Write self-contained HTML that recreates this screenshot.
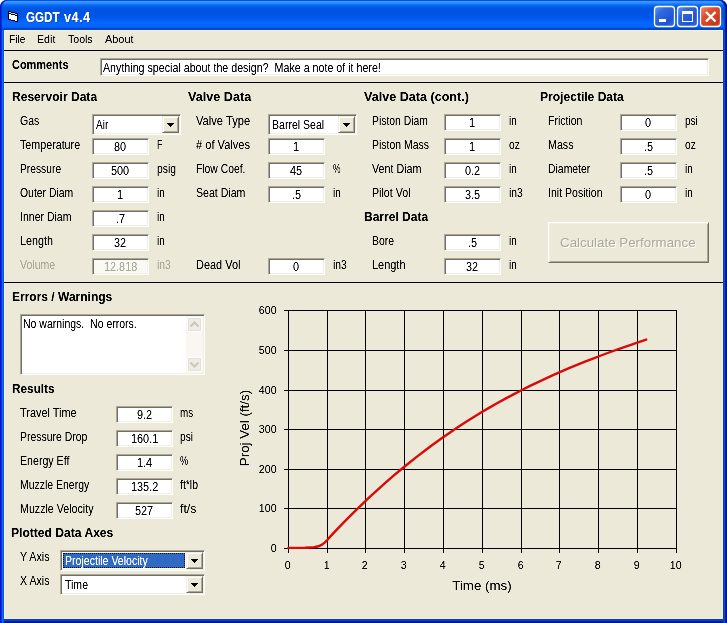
<!DOCTYPE html><html><head><meta charset="utf-8"><title>GGDT v4.4</title><style>
html,body{margin:0;padding:0}
body{width:727px;height:623px;overflow:hidden;position:relative;background:#ECE9D8;font-family:"Liberation Sans", sans-serif;font-size:12px;color:#000}
.t{position:absolute;white-space:pre;transform-origin:0 0;}
.sunk{position:absolute;box-sizing:border-box;border:1px solid;border-color:#ACA899 #fff #fff #ACA899;box-shadow:inset 1px 1px 0 #716F64, inset -1px -1px 0 #F1EFE2;}
.btn{position:absolute;box-sizing:border-box;background:#ECE9D8;border:1px solid;border-color:#F1EFE2 #716F64 #716F64 #F1EFE2;box-shadow:inset 1px 1px 0 #fff, inset -1px -1px 0 #ACA899;}
.bigbtn{position:absolute;box-sizing:border-box;background:#ECE9D8;border:1px solid;border-color:#fff #716F64 #716F64 #fff;box-shadow:inset 1px 1px 0 #F1EFE2, inset -1px -1px 0 #ACA899;}
.arrs{position:absolute;display:block}
.arr{position:absolute;width:0;height:0;border-left:3.5px solid transparent;border-right:3.5px solid transparent;border-top:4px solid #000}
.sel{position:absolute;background:#316AC5;outline:1px dotted #000;outline-offset:-1px}
.sbb{position:absolute;width:15px;height:15px;box-sizing:border-box;background:#EEEDE5;border:1px solid #fff;border-radius:2px;box-shadow:inset 0 0 0 1px #E3E1D6}
.sbb svg{position:absolute;left:-2px;top:-2px}
#titlebar{position:absolute;left:0;top:0;width:727px;height:30px;border-radius:7px 7px 0 0;
background:linear-gradient(to bottom,#0A52DC 0%,#0A52DC 3%,#3A94FF 5%,#3391FF 9%,#1C82FF 12%,#0A70F8 16%,#0562EC 21%,#0057E5 27%,#0054E3 32%,#0055E8 56%,#005CF4 64%,#0468FE 76%,#0466FC 90%,#0346D4 95%,#0440CC 100%);box-shadow:inset 1px 0 #0019CF, inset 2px 0 #0831D9, inset -1px 0 #00138C, inset -2px 0 #001EA0, inset -3px 0 #1046C8;}
.bl{position:absolute;background:#0831D9}
.hl{position:absolute;left:4px;width:719px;height:1px;background:#000}
.wb{position:absolute;top:6px;width:21px;height:21px;box-sizing:border-box;border:1px solid #fff;border-radius:3px;
background:radial-gradient(circle at 90% 90%, #0054E9 0%, #2263D5 55%, #4479E4 70%, #A3BBEC 90%, #fff 100%);box-shadow:inset 0 -1px 2px 1px #4646FF;}
</style></head><body>
<div style="position:absolute;left:0;top:0;width:727px;height:623px;box-shadow:inset 1px 0 #0019CF, inset 2px 0 #0831D9, inset 3px 0 #166AEE, inset 4px 0 #0855DD, inset -1px 0 #00138C, inset -2px 0 #001EA0, inset -3px 0 #1046C8, inset -4px 0 #0F3CB4, inset 0 -1px #00138C, inset 0 -2px #0020B0, inset 0 -3px #0A3CC4, inset 0 -4px #0F3CB0;"></div>
<div style="position:absolute;left:4px;top:30px;width:1px;height:589px;background:#EEF0FB"></div>
<div style="position:absolute;left:722px;top:30px;width:1px;height:589px;background:#E2F0FF"></div>
<div style="position:absolute;left:4px;top:618px;width:719px;height:1px;background:#E4F0FF"></div>
<div style="position:absolute;left:4px;top:30px;width:719px;height:1px;background:#F2F3F4"></div>
<div style="position:absolute;left:0;top:0;width:727px;height:30px;background:#fff"></div>
<div id="titlebar"></div>
<div class="hl" style="top:50px"></div><div class="hl" style="top:82px"></div><div class="hl" style="top:282px"></div>
<svg style="position:absolute;left:0;top:0" width="727" height="30">
<g shape-rendering="crispEdges">
<rect x="8" y="11" width="3" height="1" fill="#000"/><rect x="8" y="11" width="1" height="9" fill="#000"/>
<rect x="9" y="12" width="2" height="1" fill="#9FE4F6"/><rect x="9" y="13" width="2" height="1" fill="#000"/><rect x="9" y="14" width="2" height="5" fill="#fff"/><rect x="8" y="19" width="3" height="1" fill="#000"/>
<rect x="11" y="12" width="4" height="1" fill="#000"/><rect x="11" y="13" width="4" height="1" fill="#9FE4F6"/><rect x="11" y="14" width="4" height="1" fill="#000"/><rect x="11" y="15" width="4" height="5" fill="#fff"/><rect x="11" y="20" width="4" height="1" fill="#000"/>
<rect x="15" y="13" width="3" height="1" fill="#000"/><rect x="15" y="14" width="2" height="1" fill="#9FE4F6"/><rect x="15" y="15" width="2" height="1" fill="#000"/><rect x="15" y="16" width="2" height="5" fill="#fff"/><rect x="15" y="21" width="3" height="1" fill="#000"/><rect x="17" y="13" width="1" height="9" fill="#000"/>
</g>
<defs>
<linearGradient id="bb" x1="0" y1="0" x2="1" y2="1"><stop offset="0" stop-color="#6A98F5"/><stop offset="0.3" stop-color="#3068E2"/><stop offset="0.72" stop-color="#2052D5"/><stop offset="1" stop-color="#3A6CE6"/></linearGradient>
<linearGradient id="rb" x1="0" y1="0" x2="1" y2="1"><stop offset="0" stop-color="#EE9078"/><stop offset="0.35" stop-color="#E0502E"/><stop offset="0.8" stop-color="#C4381A"/><stop offset="1" stop-color="#DA5632"/></linearGradient>
</defs>
<rect x="654.5" y="6.5" width="20" height="20" rx="3" fill="url(#bb)" stroke="#fff" stroke-width="1.3"/>
<rect x="677.5" y="6.5" width="20" height="20" rx="3" fill="url(#bb)" stroke="#fff" stroke-width="1.3"/>
<rect x="700.5" y="6.5" width="20" height="20" rx="3" fill="url(#rb)" stroke="#fff" stroke-width="1.3"/>
<rect x="659" y="19" width="7" height="3" fill="#fff"/>
<rect x="682.5" y="12" width="10" height="9.5" fill="none" stroke="#fff"/><rect x="682" y="11" width="11" height="3" fill="#fff"/>
<path d="M706 12 L715.5 21.5 M715.5 12 L706 21.5" stroke="#fff" stroke-width="2.4" fill="none"/>
</svg>
<div class="sunk" style="left:92px;top:114px;width:89px;height:21px;background:#fff"></div>
<div class="btn" style="left:162px;top:116px;width:17px;height:17px"></div>
<svg class="arrs" style="left:167px;top:123px" width="7" height="4" shape-rendering="crispEdges"><rect x="0" y="0" width="7" height="1"/><rect x="1" y="1" width="5" height="1"/><rect x="2" y="2" width="3" height="1"/><rect x="3" y="3" width="1" height="1"/></svg>
<div class="sunk" style="left:92px;top:138px;width:57px;height:17px;background:#fff"></div>
<div class="sunk" style="left:92px;top:162px;width:57px;height:17px;background:#fff"></div>
<div class="sunk" style="left:92px;top:186px;width:57px;height:17px;background:#fff"></div>
<div class="sunk" style="left:92px;top:210px;width:57px;height:17px;background:#fff"></div>
<div class="sunk" style="left:92px;top:234px;width:57px;height:17px;background:#fff"></div>
<div class="sunk" style="left:92px;top:258px;width:57px;height:17px;background:#FAF9F4"></div>
<div class="sunk" style="left:268px;top:114px;width:89px;height:21px;background:#fff"></div>
<div class="btn" style="left:338px;top:116px;width:17px;height:17px"></div>
<svg class="arrs" style="left:343px;top:123px" width="7" height="4" shape-rendering="crispEdges"><rect x="0" y="0" width="7" height="1"/><rect x="1" y="1" width="5" height="1"/><rect x="2" y="2" width="3" height="1"/><rect x="3" y="3" width="1" height="1"/></svg>
<div class="sunk" style="left:268px;top:138px;width:57px;height:17px;background:#fff"></div>
<div class="sunk" style="left:268px;top:162px;width:57px;height:17px;background:#fff"></div>
<div class="sunk" style="left:268px;top:186px;width:57px;height:17px;background:#fff"></div>
<div class="sunk" style="left:268px;top:258px;width:57px;height:17px;background:#fff"></div>
<div class="sunk" style="left:444px;top:114px;width:57px;height:17px;background:#fff"></div>
<div class="sunk" style="left:444px;top:138px;width:57px;height:17px;background:#fff"></div>
<div class="sunk" style="left:444px;top:162px;width:57px;height:17px;background:#fff"></div>
<div class="sunk" style="left:444px;top:186px;width:57px;height:17px;background:#fff"></div>
<div class="sunk" style="left:444px;top:234px;width:57px;height:17px;background:#fff"></div>
<div class="sunk" style="left:444px;top:258px;width:57px;height:17px;background:#fff"></div>
<div class="sunk" style="left:620px;top:114px;width:57px;height:17px;background:#fff"></div>
<div class="sunk" style="left:620px;top:138px;width:57px;height:17px;background:#fff"></div>
<div class="sunk" style="left:620px;top:162px;width:57px;height:17px;background:#fff"></div>
<div class="sunk" style="left:620px;top:186px;width:57px;height:17px;background:#fff"></div>
<div class="sunk" style="left:100px;top:58px;width:609px;height:18px;background:#fff"></div>
<div class="sunk" style="left:116px;top:406px;width:57px;height:17px;background:#fff"></div>
<div class="sunk" style="left:116px;top:430px;width:57px;height:17px;background:#fff"></div>
<div class="sunk" style="left:116px;top:454px;width:57px;height:17px;background:#fff"></div>
<div class="sunk" style="left:116px;top:478px;width:57px;height:17px;background:#fff"></div>
<div class="sunk" style="left:116px;top:502px;width:57px;height:17px;background:#fff"></div>
<div class="sunk" style="left:60px;top:550px;width:145px;height:21px;background:#fff"></div>
<div class="btn" style="left:186px;top:552px;width:17px;height:17px"></div>
<svg class="arrs" style="left:191px;top:559px" width="7" height="4" shape-rendering="crispEdges"><rect x="0" y="0" width="7" height="1"/><rect x="1" y="1" width="5" height="1"/><rect x="2" y="2" width="3" height="1"/><rect x="3" y="3" width="1" height="1"/></svg>
<div class="sel" style="left:63px;top:553px;width:122px;height:15px"></div>
<div class="sunk" style="left:60px;top:574px;width:145px;height:21px;background:#fff"></div>
<div class="btn" style="left:186px;top:576px;width:17px;height:17px"></div>
<svg class="arrs" style="left:191px;top:583px" width="7" height="4" shape-rendering="crispEdges"><rect x="0" y="0" width="7" height="1"/><rect x="1" y="1" width="5" height="1"/><rect x="2" y="2" width="3" height="1"/><rect x="3" y="3" width="1" height="1"/></svg>
<div class="sunk" style="left:20px;top:314px;width:185px;height:61px;background:#fff"></div>
<div style="position:absolute;left:186px;top:316px;width:17px;height:57px;background:#F8F7F1"></div>
<div class="sbb" style="left:187px;top:317px"><svg width="17" height="17"><path d="M4.5 10.5 L8.5 6.5 L12.5 10.5" fill="none" stroke="#C9C7BA" stroke-width="2"/></svg></div>
<div class="sbb" style="left:187px;top:357px"><svg width="17" height="17"><path d="M4.5 6.5 L8.5 10.5 L12.5 6.5" fill="none" stroke="#C9C7BA" stroke-width="2"/></svg></div>
<div class="bigbtn" style="left:548px;top:222px;width:161px;height:41px"></div>
<svg style="position:absolute;left:0;top:0" width="727" height="623" shape-rendering="crispEdges"><rect x="288" y="310" width="1" height="243" fill="#000"/><rect x="327" y="310" width="1" height="243" fill="#000"/><rect x="365" y="310" width="1" height="243" fill="#000"/><rect x="404" y="310" width="1" height="243" fill="#000"/><rect x="443" y="310" width="1" height="243" fill="#000"/><rect x="482" y="310" width="1" height="243" fill="#000"/><rect x="521" y="310" width="1" height="243" fill="#000"/><rect x="559" y="310" width="1" height="243" fill="#000"/><rect x="598" y="310" width="1" height="243" fill="#000"/><rect x="637" y="310" width="1" height="243" fill="#000"/><rect x="676" y="310" width="1" height="243" fill="#000"/><rect x="284" y="548" width="393" height="1" fill="#000"/><rect x="284" y="508" width="393" height="1" fill="#000"/><rect x="284" y="469" width="393" height="1" fill="#000"/><rect x="284" y="429" width="393" height="1" fill="#000"/><rect x="284" y="390" width="393" height="1" fill="#000"/><rect x="284" y="350" width="393" height="1" fill="#000"/><rect x="284" y="310" width="393" height="1" fill="#000"/><polyline shape-rendering="auto" fill="none" stroke="#D90A0A" stroke-width="2.4" stroke-linejoin="round" stroke-linecap="round" points="288.4,547.9 305,547.7 314,547.2 318.5,546.3 322,544.6 325,542.4 327.2,540.0 329,537.9 337,529.4 345,521.1 353,513.1 361,505.3 369,497.7 377,490.3 385,483.2 393,476.2 401,469.5 409,463.0 417,456.6 425,450.5 433,444.5 441,438.8 449,433.2 457,427.8 465,422.6 473,417.5 481,412.6 489,407.9 497,403.3 505,398.9 513,394.6 521,390.5 529,386.4 537,382.6 545,378.8 553,375.2 561,371.6 569,368.2 577,364.9 585,361.7 593,358.6 601,355.5 609,352.5 617,349.7 625,346.8 633,344.1 641,341.4 646.2,339.6"/></svg>
<span class="t" style="left:561.30px;top:234.88px;font-size:13.33px;line-height:17px;font-weight:400;color:#fff;transform:scaleX(1.0002);">Calculate Performance</span>
<span class="t" style="left:560.30px;top:233.88px;font-size:13.33px;line-height:17px;font-weight:400;color:#ACA899;transform:scaleX(1.0002);">Calculate Performance</span>
<svg width="0" height="0" style="position:absolute"><filter id="thr" x="0" y="0" width="100%" height="100%" color-interpolation-filters="sRGB"><feComponentTransfer><feFuncA type="table" tableValues="0 0.08 0.62 0.95 1"/></feComponentTransfer></filter></svg>
<div id="txt" style="position:absolute;left:0;top:0;width:727px;height:623px;filter:url(#thr)">
<span class="t" style="left:9.30px;top:32.19px;font-size:11px;line-height:14px;font-weight:400;color:#000;transform:scaleX(0.9248);">File</span>
<span class="t" style="left:37.20px;top:32.19px;font-size:11px;line-height:14px;font-weight:400;color:#000;transform:scaleX(0.9700);">Edit</span>
<span class="t" style="left:68.10px;top:32.19px;font-size:11px;line-height:14px;font-weight:400;color:#000;transform:scaleX(0.9577);">Tools</span>
<span class="t" style="left:104.70px;top:32.19px;font-size:11px;line-height:14px;font-weight:400;color:#000;transform:scaleX(0.9913);">About</span>
<span class="t" style="left:12.20px;top:56.67px;font-size:12.5px;line-height:16px;font-weight:700;color:#000;transform:scaleX(0.8747);">Comments</span>
<span class="t" style="left:12.00px;top:88.67px;font-size:12.5px;line-height:16px;font-weight:700;color:#000;transform:scaleX(0.9643);">Reservoir Data</span>
<span class="t" style="left:187.50px;top:88.67px;font-size:12.5px;line-height:16px;font-weight:700;color:#000;transform:scaleX(1.0120);">Valve Data</span>
<span class="t" style="left:363.60px;top:88.67px;font-size:12.5px;line-height:16px;font-weight:700;color:#000;transform:scaleX(1.0067);">Valve Data (cont.)</span>
<span class="t" style="left:539.90px;top:88.67px;font-size:12.5px;line-height:16px;font-weight:700;color:#000;transform:scaleX(0.9650);">Projectile Data</span>
<span class="t" style="left:363.60px;top:208.67px;font-size:12.5px;line-height:16px;font-weight:700;color:#000;transform:scaleX(0.9610);">Barrel Data</span>
<span class="t" style="left:11.60px;top:288.67px;font-size:12.5px;line-height:16px;font-weight:700;color:#000;transform:scaleX(0.9605);">Errors / Warnings</span>
<span class="t" style="left:11.60px;top:380.67px;font-size:12.5px;line-height:16px;font-weight:700;color:#000;transform:scaleX(0.9434);">Results</span>
<span class="t" style="left:11.40px;top:524.67px;font-size:12.5px;line-height:16px;font-weight:700;color:#000;transform:scaleX(0.9667);">Plotted Data Axes</span>
<span class="t" style="left:20.20px;top:112.67px;font-size:12.5px;line-height:16px;font-weight:400;color:#000;transform:scaleX(0.8458);">Gas</span>
<span class="t" style="left:95.90px;top:116.67px;font-size:12.5px;line-height:16px;font-weight:400;color:#000;transform:scaleX(0.8049);">Air</span>
<span class="t" style="left:20.20px;top:136.67px;font-size:12.5px;line-height:16px;font-weight:400;color:#000;transform:scaleX(0.8563);">Temperature</span>
<span class="t" style="left:114.45px;top:138.67px;font-size:12.5px;line-height:16px;font-weight:400;color:#000;transform:scaleX(0.8700);">80</span>
<span class="t" style="left:156.70px;top:136.67px;font-size:12.5px;line-height:16px;font-weight:400;color:#000;transform:scaleX(0.6806);">F</span>
<span class="t" style="left:20.20px;top:160.67px;font-size:12.5px;line-height:16px;font-weight:400;color:#000;transform:scaleX(0.8215);">Pressure</span>
<span class="t" style="left:111.43px;top:162.67px;font-size:12.5px;line-height:16px;font-weight:400;color:#000;transform:scaleX(0.8700);">500</span>
<span class="t" style="left:156.70px;top:160.67px;font-size:12.5px;line-height:16px;font-weight:400;color:#000;transform:scaleX(0.8283);">psig</span>
<span class="t" style="left:20.20px;top:184.67px;font-size:12.5px;line-height:16px;font-weight:400;color:#000;transform:scaleX(0.8325);">Outer Diam</span>
<span class="t" style="left:117.48px;top:186.67px;font-size:12.5px;line-height:16px;font-weight:400;color:#000;transform:scaleX(0.8700);">1</span>
<span class="t" style="left:156.70px;top:184.67px;font-size:12.5px;line-height:16px;font-weight:400;color:#000;transform:scaleX(0.7807);">in</span>
<span class="t" style="left:20.20px;top:208.67px;font-size:12.5px;line-height:16px;font-weight:400;color:#000;transform:scaleX(0.8423);">Inner Diam</span>
<span class="t" style="left:115.96px;top:210.67px;font-size:12.5px;line-height:16px;font-weight:400;color:#000;transform:scaleX(0.8700);">.7</span>
<span class="t" style="left:156.70px;top:208.67px;font-size:12.5px;line-height:16px;font-weight:400;color:#000;transform:scaleX(0.7807);">in</span>
<span class="t" style="left:20.20px;top:232.67px;font-size:12.5px;line-height:16px;font-weight:400;color:#000;transform:scaleX(0.8657);">Length</span>
<span class="t" style="left:114.45px;top:234.67px;font-size:12.5px;line-height:16px;font-weight:400;color:#000;transform:scaleX(0.8700);">32</span>
<span class="t" style="left:156.70px;top:232.67px;font-size:12.5px;line-height:16px;font-weight:400;color:#000;transform:scaleX(0.7807);">in</span>
<span class="t" style="left:20.20px;top:256.67px;font-size:12.5px;line-height:16px;font-weight:400;color:#ACA899;transform:scaleX(0.8417);">Volume</span>
<span class="t" style="left:103.87px;top:258.67px;font-size:12.5px;line-height:16px;font-weight:400;color:#ACA899;transform:scaleX(0.8700);">12.818</span>
<span class="t" style="left:156.70px;top:256.67px;font-size:12.5px;line-height:16px;font-weight:400;color:#ACA899;transform:scaleX(0.8330);">in3</span>
<span class="t" style="left:196.20px;top:112.67px;font-size:12.5px;line-height:16px;font-weight:400;color:#000;transform:scaleX(0.8915);">Valve Type</span>
<span class="t" style="left:271.90px;top:116.67px;font-size:12.5px;line-height:16px;font-weight:400;color:#000;transform:scaleX(0.8441);">Barrel Seal</span>
<span class="t" style="left:196.20px;top:136.67px;font-size:12.5px;line-height:16px;font-weight:400;color:#000;transform:scaleX(0.8880);"># of Valves</span>
<span class="t" style="left:293.48px;top:138.67px;font-size:12.5px;line-height:16px;font-weight:400;color:#000;transform:scaleX(0.8700);">1</span>
<span class="t" style="left:196.20px;top:160.67px;font-size:12.5px;line-height:16px;font-weight:400;color:#000;transform:scaleX(0.8268);">Flow Coef.</span>
<span class="t" style="left:290.45px;top:162.67px;font-size:12.5px;line-height:16px;font-weight:400;color:#000;transform:scaleX(0.8700);">45</span>
<span class="t" style="left:332.70px;top:160.67px;font-size:12.5px;line-height:16px;font-weight:400;color:#000;transform:scaleX(0.6831);">%</span>
<span class="t" style="left:196.20px;top:184.67px;font-size:12.5px;line-height:16px;font-weight:400;color:#000;transform:scaleX(0.8465);">Seat Diam</span>
<span class="t" style="left:291.96px;top:186.67px;font-size:12.5px;line-height:16px;font-weight:400;color:#000;transform:scaleX(0.8700);">.5</span>
<span class="t" style="left:332.70px;top:184.67px;font-size:12.5px;line-height:16px;font-weight:400;color:#000;transform:scaleX(0.7807);">in</span>
<span class="t" style="left:196.20px;top:256.67px;font-size:12.5px;line-height:16px;font-weight:400;color:#000;transform:scaleX(0.8771);">Dead Vol</span>
<span class="t" style="left:293.48px;top:258.67px;font-size:12.5px;line-height:16px;font-weight:400;color:#000;transform:scaleX(0.8700);">0</span>
<span class="t" style="left:332.70px;top:256.67px;font-size:12.5px;line-height:16px;font-weight:400;color:#000;transform:scaleX(0.8330);">in3</span>
<span class="t" style="left:372.20px;top:112.67px;font-size:12.5px;line-height:16px;font-weight:400;color:#000;transform:scaleX(0.8310);">Piston Diam</span>
<span class="t" style="left:469.48px;top:114.67px;font-size:12.5px;line-height:16px;font-weight:400;color:#000;transform:scaleX(0.8700);">1</span>
<span class="t" style="left:508.70px;top:112.67px;font-size:12.5px;line-height:16px;font-weight:400;color:#000;transform:scaleX(0.7807);">in</span>
<span class="t" style="left:372.20px;top:136.67px;font-size:12.5px;line-height:16px;font-weight:400;color:#000;transform:scaleX(0.8371);">Piston Mass</span>
<span class="t" style="left:469.48px;top:138.67px;font-size:12.5px;line-height:16px;font-weight:400;color:#000;transform:scaleX(0.8700);">1</span>
<span class="t" style="left:508.70px;top:136.67px;font-size:12.5px;line-height:16px;font-weight:400;color:#000;transform:scaleX(0.8256);">oz</span>
<span class="t" style="left:372.20px;top:160.67px;font-size:12.5px;line-height:16px;font-weight:400;color:#000;transform:scaleX(0.8583);">Vent Diam</span>
<span class="t" style="left:464.94px;top:162.67px;font-size:12.5px;line-height:16px;font-weight:400;color:#000;transform:scaleX(0.8700);">0.2</span>
<span class="t" style="left:508.70px;top:160.67px;font-size:12.5px;line-height:16px;font-weight:400;color:#000;transform:scaleX(0.7807);">in</span>
<span class="t" style="left:372.20px;top:184.67px;font-size:12.5px;line-height:16px;font-weight:400;color:#000;transform:scaleX(0.8523);">Pilot Vol</span>
<span class="t" style="left:464.94px;top:186.67px;font-size:12.5px;line-height:16px;font-weight:400;color:#000;transform:scaleX(0.8700);">3.5</span>
<span class="t" style="left:508.70px;top:184.67px;font-size:12.5px;line-height:16px;font-weight:400;color:#000;transform:scaleX(0.8330);">in3</span>
<span class="t" style="left:372.20px;top:232.67px;font-size:12.5px;line-height:16px;font-weight:400;color:#000;transform:scaleX(0.8369);">Bore</span>
<span class="t" style="left:467.96px;top:234.67px;font-size:12.5px;line-height:16px;font-weight:400;color:#000;transform:scaleX(0.8700);">.5</span>
<span class="t" style="left:508.70px;top:232.67px;font-size:12.5px;line-height:16px;font-weight:400;color:#000;transform:scaleX(0.7807);">in</span>
<span class="t" style="left:372.20px;top:256.67px;font-size:12.5px;line-height:16px;font-weight:400;color:#000;transform:scaleX(0.8762);">Length</span>
<span class="t" style="left:466.45px;top:258.67px;font-size:12.5px;line-height:16px;font-weight:400;color:#000;transform:scaleX(0.8700);">32</span>
<span class="t" style="left:508.70px;top:256.67px;font-size:12.5px;line-height:16px;font-weight:400;color:#000;transform:scaleX(0.7807);">in</span>
<span class="t" style="left:548.20px;top:112.67px;font-size:12.5px;line-height:16px;font-weight:400;color:#000;transform:scaleX(0.8393);">Friction</span>
<span class="t" style="left:645.48px;top:114.67px;font-size:12.5px;line-height:16px;font-weight:400;color:#000;transform:scaleX(0.8700);">0</span>
<span class="t" style="left:684.70px;top:112.67px;font-size:12.5px;line-height:16px;font-weight:400;color:#000;transform:scaleX(0.8008);">psi</span>
<span class="t" style="left:548.20px;top:136.67px;font-size:12.5px;line-height:16px;font-weight:400;color:#000;transform:scaleX(0.8536);">Mass</span>
<span class="t" style="left:643.96px;top:138.67px;font-size:12.5px;line-height:16px;font-weight:400;color:#000;transform:scaleX(0.8700);">.5</span>
<span class="t" style="left:684.70px;top:136.67px;font-size:12.5px;line-height:16px;font-weight:400;color:#000;transform:scaleX(0.8256);">oz</span>
<span class="t" style="left:548.20px;top:160.67px;font-size:12.5px;line-height:16px;font-weight:400;color:#000;transform:scaleX(0.8340);">Diameter</span>
<span class="t" style="left:643.96px;top:162.67px;font-size:12.5px;line-height:16px;font-weight:400;color:#000;transform:scaleX(0.8700);">.5</span>
<span class="t" style="left:684.70px;top:160.67px;font-size:12.5px;line-height:16px;font-weight:400;color:#000;transform:scaleX(0.7807);">in</span>
<span class="t" style="left:548.20px;top:184.67px;font-size:12.5px;line-height:16px;font-weight:400;color:#000;transform:scaleX(0.8433);">Init Position</span>
<span class="t" style="left:645.48px;top:186.67px;font-size:12.5px;line-height:16px;font-weight:400;color:#000;transform:scaleX(0.8700);">0</span>
<span class="t" style="left:684.70px;top:184.67px;font-size:12.5px;line-height:16px;font-weight:400;color:#000;transform:scaleX(0.7807);">in</span>
<span class="t" style="left:102.70px;top:59.67px;font-size:12.5px;line-height:16px;font-weight:400;color:#000;transform:scaleX(0.8542);">Anything special about the design?  Make a note of it here!</span>
<span class="t" style="left:20.20px;top:404.67px;font-size:12.5px;line-height:16px;font-weight:400;color:#000;transform:scaleX(0.8746);">Travel Time</span>
<span class="t" style="left:136.94px;top:406.67px;font-size:12.5px;line-height:16px;font-weight:400;color:#000;transform:scaleX(0.8700);">9.2</span>
<span class="t" style="left:180.30px;top:404.67px;font-size:12.5px;line-height:16px;font-weight:400;color:#000;transform:scaleX(0.7858);">ms</span>
<span class="t" style="left:20.20px;top:428.67px;font-size:12.5px;line-height:16px;font-weight:400;color:#000;transform:scaleX(0.8351);">Pressure Drop</span>
<span class="t" style="left:130.89px;top:430.67px;font-size:12.5px;line-height:16px;font-weight:400;color:#000;transform:scaleX(0.8700);">160.1</span>
<span class="t" style="left:180.30px;top:428.67px;font-size:12.5px;line-height:16px;font-weight:400;color:#000;transform:scaleX(0.8133);">psi</span>
<span class="t" style="left:20.20px;top:452.67px;font-size:12.5px;line-height:16px;font-weight:400;color:#000;transform:scaleX(0.8497);">Energy Eff</span>
<span class="t" style="left:136.94px;top:454.67px;font-size:12.5px;line-height:16px;font-weight:400;color:#000;transform:scaleX(0.8700);">1.4</span>
<span class="t" style="left:180.30px;top:452.67px;font-size:12.5px;line-height:16px;font-weight:400;color:#000;transform:scaleX(0.7371);">%</span>
<span class="t" style="left:20.20px;top:476.67px;font-size:12.5px;line-height:16px;font-weight:400;color:#000;transform:scaleX(0.8369);">Muzzle Energy</span>
<span class="t" style="left:130.89px;top:478.67px;font-size:12.5px;line-height:16px;font-weight:400;color:#000;transform:scaleX(0.8700);">135.2</span>
<span class="t" style="left:180.30px;top:476.67px;font-size:12.5px;line-height:16px;font-weight:400;color:#000;transform:scaleX(0.8354);">ft*lb</span>
<span class="t" style="left:20.20px;top:500.67px;font-size:12.5px;line-height:16px;font-weight:400;color:#000;transform:scaleX(0.8531);">Muzzle Velocity</span>
<span class="t" style="left:135.43px;top:502.67px;font-size:12.5px;line-height:16px;font-weight:400;color:#000;transform:scaleX(0.8700);">527</span>
<span class="t" style="left:180.30px;top:500.67px;font-size:12.5px;line-height:16px;font-weight:400;color:#000;transform:scaleX(0.9837);">ft/s</span>
<span class="t" style="left:19.80px;top:548.67px;font-size:12.5px;line-height:16px;font-weight:400;color:#000;transform:scaleX(0.8547);">Y Axis</span>
<span class="t" style="left:19.80px;top:572.67px;font-size:12.5px;line-height:16px;font-weight:400;color:#000;transform:scaleX(0.8489);">X Axis</span>
<span class="t" style="left:64.70px;top:552.67px;font-size:12.5px;line-height:16px;font-weight:400;color:#fff;transform:scaleX(0.8452);">Projectile Velocity</span>
<span class="t" style="left:64.70px;top:576.67px;font-size:12.5px;line-height:16px;font-weight:400;color:#000;transform:scaleX(0.8416);">Time</span>
<span class="t" style="left:22.80px;top:315.67px;font-size:12.5px;line-height:16px;font-weight:400;color:#000;transform:scaleX(0.8400);">No warnings.  No errors.</span>
<span class="t" style="left:25.70px;top:8.15px;font-size:14px;line-height:18px;font-weight:700;color:#fff;transform:scaleX(0.8306);text-shadow:1px 1px 0 rgba(10,24,131,0.38);">GGDT</span>
<span class="t" style="left:63.70px;top:8.15px;font-size:14px;line-height:18px;font-weight:700;color:#fff;transform:scaleX(0.8969);text-shadow:1px 1px 0 rgba(10,24,131,0.38);letter-spacing:0.6px;">v4.4</span>
<span class="t" style="left:270.66px;top:542.30px;font-size:10.67px;line-height:13px;font-weight:400;color:#000;transform:scaleX(1.0000);">0</span>
<span class="t" style="left:258.82px;top:502.30px;font-size:10.67px;line-height:13px;font-weight:400;color:#000;transform:scaleX(1.0000);">100</span>
<span class="t" style="left:258.82px;top:463.30px;font-size:10.67px;line-height:13px;font-weight:400;color:#000;transform:scaleX(1.0000);">200</span>
<span class="t" style="left:258.82px;top:423.30px;font-size:10.67px;line-height:13px;font-weight:400;color:#000;transform:scaleX(1.0000);">300</span>
<span class="t" style="left:258.82px;top:384.30px;font-size:10.67px;line-height:13px;font-weight:400;color:#000;transform:scaleX(1.0000);">400</span>
<span class="t" style="left:258.82px;top:344.30px;font-size:10.67px;line-height:13px;font-weight:400;color:#000;transform:scaleX(1.0000);">500</span>
<span class="t" style="left:258.82px;top:304.30px;font-size:10.67px;line-height:13px;font-weight:400;color:#000;transform:scaleX(1.0000);">600</span>
<span class="t" style="left:284.83px;top:558.80px;font-size:10.67px;line-height:13px;font-weight:400;color:#000;transform:scaleX(1.0000);">0</span>
<span class="t" style="left:323.83px;top:558.80px;font-size:10.67px;line-height:13px;font-weight:400;color:#000;transform:scaleX(1.0000);">1</span>
<span class="t" style="left:361.83px;top:558.80px;font-size:10.67px;line-height:13px;font-weight:400;color:#000;transform:scaleX(1.0000);">2</span>
<span class="t" style="left:400.83px;top:558.80px;font-size:10.67px;line-height:13px;font-weight:400;color:#000;transform:scaleX(1.0000);">3</span>
<span class="t" style="left:439.83px;top:558.80px;font-size:10.67px;line-height:13px;font-weight:400;color:#000;transform:scaleX(1.0000);">4</span>
<span class="t" style="left:478.83px;top:558.80px;font-size:10.67px;line-height:13px;font-weight:400;color:#000;transform:scaleX(1.0000);">5</span>
<span class="t" style="left:517.83px;top:558.80px;font-size:10.67px;line-height:13px;font-weight:400;color:#000;transform:scaleX(1.0000);">6</span>
<span class="t" style="left:555.83px;top:558.80px;font-size:10.67px;line-height:13px;font-weight:400;color:#000;transform:scaleX(1.0000);">7</span>
<span class="t" style="left:594.83px;top:558.80px;font-size:10.67px;line-height:13px;font-weight:400;color:#000;transform:scaleX(1.0000);">8</span>
<span class="t" style="left:633.83px;top:558.80px;font-size:10.67px;line-height:13px;font-weight:400;color:#000;transform:scaleX(1.0000);">9</span>
<span class="t" style="left:669.87px;top:558.80px;font-size:10.67px;line-height:13px;font-weight:400;color:#000;transform:scaleX(1.0000);">10</span>
<span class="t" style="left:452.26px;top:576.88px;font-size:13.33px;line-height:17px;font-weight:400;color:#000;transform:scaleX(1.0000);">Time (ms)</span>
<div style="position:absolute;white-space:pre;font-size:13.33px;line-height:16px;left:194.9px;top:419.5px;width:100px;height:16px;text-align:center;transform:rotate(-90deg);transform-origin:50% 50%;">Proj Vel (ft/s)</div>
</div>
</body></html>
